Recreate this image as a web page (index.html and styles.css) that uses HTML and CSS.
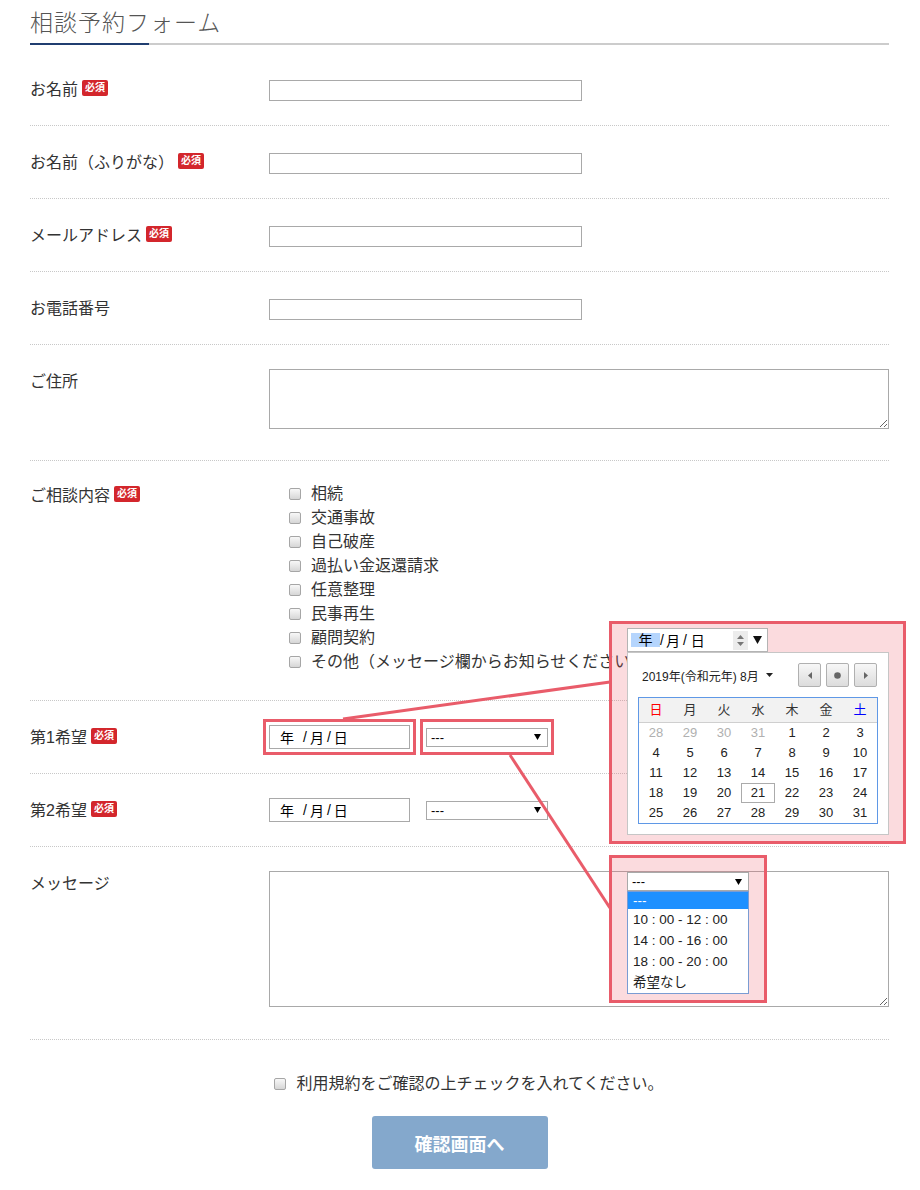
FILE: index.html
```html
<!DOCTYPE html>
<html lang="ja">
<head>
    <meta charset="UTF-8">
    <meta name="viewport" content="width=device-width, initial-scale=1.0">
    <title>相談予約フォーム</title>
    <link rel="stylesheet" href="styles.css">
</head>
<body>
<div class="page">
    <h2 class="form-title">相談予約フォーム</h2>

    <!-- 基本情報 -->
    <div class="form-row">
        <div class="label">お名前<span class="req">必須</span></div>
        <div class="field"><input type="text" class="text"></div>
    </div>
    <div class="form-row">
        <div class="label">お名前（ふりがな）<span class="req">必須</span></div>
        <div class="field"><input type="text" class="text"></div>
    </div>
    <div class="form-row">
        <div class="label">メールアドレス<span class="req">必須</span></div>
        <div class="field"><input type="text" class="text"></div>
    </div>
    <div class="form-row">
        <div class="label">お電話番号</div>
        <div class="field"><input type="text" class="text"></div>
    </div>
    <div class="form-row">
        <div class="label">ご住所</div>
        <div class="field"><textarea class="area area-address"></textarea></div>
    </div>

    <!-- 相談内容 -->
    <div class="form-row row-check">
        <div class="label">ご相談内容<span class="req">必須</span></div>
        <div class="field">
            <ul class="check-list">
                <li><label><input type="checkbox">相続</label></li>
                <li><label><input type="checkbox">交通事故</label></li>
                <li><label><input type="checkbox">自己破産</label></li>
                <li><label><input type="checkbox">過払い金返還請求</label></li>
                <li><label><input type="checkbox">任意整理</label></li>
                <li><label><input type="checkbox">民事再生</label></li>
                <li><label><input type="checkbox">顧問契約</label></li>
                <li><label><input type="checkbox">その他（メッセージ欄からお知らせください）</label></li>
            </ul>
        </div>
    </div>

    <!-- 希望日時 -->
    <div class="form-row">
        <div class="label">第1希望<span class="req">必須</span></div>
        <div class="field date-line">
            <span class="date-box mark"><span class="yy">年</span><span class="sep">/</span>月<span class="sep">/</span>日</span>
            <span class="select-wrap mark">
                <span class="select">---<svg width="7" height="6" viewBox="0 0 7 6"><polygon points="0,0 7,0 3.5,6" fill="#000"/></svg></span>
            </span>
        </div>
    </div>
    <div class="form-row">
        <div class="label">第2希望<span class="req">必須</span></div>
        <div class="field date-line">
            <span class="date-box"><span class="yy">年</span><span class="sep">/</span>月<span class="sep">/</span>日</span>
            <span class="select-wrap">
                <span class="select">---<svg width="7" height="6" viewBox="0 0 7 6"><polygon points="0,0 7,0 3.5,6" fill="#000"/></svg></span>
            </span>
        </div>
    </div>
    <div class="form-row">
        <div class="label">メッセージ</div>
        <div class="field"><textarea class="area area-message"></textarea></div>
    </div>

    <div class="agree">
        <label><input type="checkbox">利用規約をご確認の上チェックを入れてください。</label>
    </div>
    <button type="button" class="submit">確認画面へ</button>

    <!-- 説明用の吹き出し -->
    <svg class="leaders" width="920" height="1190">
        <line x1="343" y1="719" x2="610" y2="682"/>
        <line x1="510" y1="755" x2="610" y2="908"/>
    </svg>

    <div class="callout callout-cal">
        <div class="cal-input">
            <span class="cal-yy">年</span><span class="sep">/</span>月<span class="sep sep-2">/</span>日
            <svg class="spin" width="15" height="19" viewBox="0 0 15 19">
                <rect width="15" height="19" fill="#ececec"/>
                <polygon points="4,8 7.5,4 11,8" fill="#777"/>
                <polygon points="4,11 11,11 7.5,15" fill="#777"/>
            </svg>
            <svg class="drop" width="9" height="8" viewBox="0 0 9 8"><polygon points="0,0 9,0 4.5,8" fill="#111"/></svg>
        </div>
        <div class="cal-popup">
            <div class="cal-head">
                <span class="cal-month">2019年(令和元年) 8月<svg width="7" height="4" viewBox="0 0 7 4"><polygon points="0,0 7,0 3.5,4" fill="#222"/></svg></span>
                <span class="cal-nav">
                    <button type="button"><svg width="4" height="7" viewBox="0 0 4 7"><polygon points="4,0 4,7 0,3.5" fill="#666"/></svg></button>
                    <button type="button"><svg width="7" height="7" viewBox="0 0 7 7"><circle cx="3.5" cy="3.5" r="3.3" fill="#666"/></svg></button>
                    <button type="button"><svg width="4" height="7" viewBox="0 0 4 7"><polygon points="0,0 4,3.5 0,7" fill="#666"/></svg></button>
                </span>
            </div>
            <div class="cal-grid">
                <span class="wd sun">日</span><span class="wd">月</span><span class="wd">火</span><span class="wd">水</span><span class="wd">木</span><span class="wd">金</span><span class="wd sat">土</span>
                <span class="day off">28</span><span class="day off">29</span><span class="day off">30</span><span class="day off">31</span><span class="day">1</span><span class="day">2</span><span class="day">3</span>
                <span class="day">4</span><span class="day">5</span><span class="day">6</span><span class="day">7</span><span class="day">8</span><span class="day">9</span><span class="day">10</span>
                <span class="day">11</span><span class="day">12</span><span class="day">13</span><span class="day">14</span><span class="day">15</span><span class="day">16</span><span class="day">17</span>
                <span class="day">18</span><span class="day">19</span><span class="day">20</span><span class="day today">21</span><span class="day">22</span><span class="day">23</span><span class="day">24</span>
                <span class="day">25</span><span class="day">26</span><span class="day">27</span><span class="day">28</span><span class="day">29</span><span class="day">30</span><span class="day">31</span>
            </div>
        </div>
    </div>

    <div class="callout callout-time">
        <span class="select">---<svg width="7" height="6" viewBox="0 0 7 6"><polygon points="0,0 7,0 3.5,6" fill="#000"/></svg></span>
        <ul class="opt-list">
            <li class="on">---</li>
            <li>10 : 00 - 12 : 00</li>
            <li>14 : 00 - 16 : 00</li>
            <li>18 : 00 - 20 : 00</li>
            <li>希望なし</li>
        </ul>
    </div>
</div>
</body>
</html>
```

FILE: styles.css
```css
body {
    margin: 0;
    font-family: "Liberation Sans", "Noto Sans CJK JP", sans-serif;
    color: #333;
    background: #fff;
}
.page {
    position: relative;
    padding: 6px 31px 21px 30px;
}
.form-title {
    margin: 0 0 8px;
    padding-bottom: 5px;
    font-size: 23px;
    line-height: 34px;
    font-weight: 300;
    letter-spacing: 1px;
    color: #555;
    background: linear-gradient(to right, #203e70 119px, #cccccc 119px) left bottom / 100% 2px no-repeat;
}

/* rows */
.form-row {
    display: grid;
    grid-template-columns: 239px 1fr;
    padding: 25px 0 24px;
    border-bottom: 1px dotted #c8c8c8;
}
.label {
    display: flex;
    align-items: center;
    height: 20px;
    font-size: 16px;
}
.row-check .label {
    margin-top: -2px;
}
.req {
    margin-left: 4px;
    padding: 0 3px;
    height: 16px;
    line-height: 16px;
    font-size: 10px;
    font-weight: bold;
    color: #fff;
    background: #d3262c;
    border-radius: 2px;
}
.text {
    display: block;
    margin-top: 2px;
    width: 313px;
    height: 21px;
    padding: 0 4px;
    border: 1px solid #a9a9a9;
    box-sizing: border-box;
}
.area {
    display: block;
    width: 100%;
    margin-top: -1px;
    border: 1px solid #a9a9a9;
    box-sizing: border-box;
}
.area-address {
    height: 60px;
    margin-bottom: 7px;
}
.area-message {
    height: 136px;
    margin-bottom: 8px;
}

/* checkboxes */
.check-list {
    list-style: none;
    margin: -4px 0 2px;
    padding: 0 0 0 20px;
}
.check-list li {
    height: 24px;
    line-height: 24px;
    font-size: 16px;
}
.check-list label,
.agree label {
    display: inline-flex;
    align-items: center;
    white-space: nowrap;
}
input[type="checkbox"] {
    appearance: none;
    -webkit-appearance: none;
    width: 12px;
    height: 12px;
    margin: 0 10px 0 0;
    border: 1px solid #a6a6a6;
    border-radius: 2px;
    background: linear-gradient(#f8f8f8, #d6d6d6);
    box-sizing: border-box;
}

/* date + time */
.date-line {
    display: flex;
    gap: 16px;
}
.date-box {
    display: flex;
    align-items: center;
    width: 141px;
    height: 24px;
    margin-top: -1px;
    padding-left: 10px;
    border: 1px solid #a9a9a9;
    box-sizing: border-box;
    font-size: 14px;
    color: #000;
}
.date-box .yy {
    padding-right: 6px;
}
.sep {
    padding: 0 3px;
}
.select-wrap {
    display: flex;
    align-items: center;
    width: 122px;
    height: 24px;
    margin-top: -1px;
}
.select {
    display: flex;
    align-items: center;
    justify-content: space-between;
    width: 122px;
    height: 19px;
    padding: 0 6px 0 4px;
    border: 1px solid #a9a9a9;
    box-sizing: border-box;
    background: #fff;
    font-size: 13px;
    color: #000;
}
.mark {
    outline: 3px solid #e95c6a;
    outline-offset: 3px;
}

/* submit */
.agree {
    display: flex;
    justify-content: center;
    padding: 34px 0 0 19px;
    line-height: 20px;
    font-size: 16px;
}
.submit {
    display: block;
    margin: 22px auto 0;
    width: 176px;
    height: 53px;
    border: 0;
    border-radius: 3px;
    background: #84a8cc;
    color: #fff;
    font-family: inherit;
    font-size: 18px;
    font-weight: bold;
}

/* callouts */
.leaders {
    position: absolute;
    left: 0;
    top: 0;
    pointer-events: none;
}
.leaders line {
    stroke: #e95c6a;
    stroke-width: 3;
}
.callout {
    position: absolute;
    border: 3px solid #e95c6a;
    background: rgba(235, 90, 105, 0.22);
}
.callout-cal {
    left: 609px;
    top: 621px;
    width: 262px;
    padding: 4px 14px 6px 15px;
}
.cal-input {
    display: flex;
    align-items: center;
    width: 141px;
    height: 24px;
    padding: 0 5px 0 3px;
    border: 1px solid #b4b4b4;
    box-sizing: border-box;
    background: #fff;
    font-size: 14px;
    color: #000;
}
.cal-yy {
    display: inline-block;
    width: 29px;
    line-height: 14px;
    text-align: center;
    background: #b5d5fd;
}
.cal-input .sep {
    padding: 0 2px 0 0;
}
.cal-input .sep-2 {
    padding: 0 4px 0 3px;
}
.spin {
    margin-left: auto;
    margin-right: 5px;
}
.cal-popup {
    padding: 10px;
    border: 1px solid #c6c6c6;
    background: #fff;
}
.cal-head {
    display: flex;
    align-items: center;
    justify-content: space-between;
    height: 24px;
    margin-bottom: 10px;
    padding: 0 1px 0 4px;
}
.cal-month {
    display: flex;
    align-items: center;
    font-size: 12px;
    color: #222;
}
.cal-month svg {
    margin-left: 7px;
}
.cal-nav {
    display: flex;
    gap: 5px;
}
.cal-nav button {
    display: flex;
    align-items: center;
    justify-content: center;
    width: 23px;
    height: 24px;
    padding: 0;
    border: 1px solid #b0b0b0;
    border-radius: 2px;
    background: linear-gradient(#f7f7f7, #dcdcdc);
}
.cal-grid {
    display: grid;
    grid-template-columns: repeat(7, 34px);
    border: 1px solid #5f98e6;
    font-size: 13px;
    color: #222;
    text-align: center;
}
.wd {
    height: 24px;
    line-height: 24px;
    background: #f2f2f2;
    border-bottom: 1px solid #cfcfcf;
    color: #333;
}
.wd.sun {
    color: #f00;
}
.wd.sat {
    color: #00f;
}
.day {
    height: 20px;
    line-height: 20px;
}
.day.off {
    color: #b0b0b0;
}
.day.today {
    box-shadow: inset 0 0 0 1px #ababab;
}
.callout-time {
    left: 609px;
    top: 855px;
    width: 122px;
    padding: 14px 15px 6px;
}
.opt-list {
    list-style: none;
    margin: 0;
    padding: 0;
    border: 1px solid #7a9cd3;
    background: #fff;
    font-size: 13.5px;
    color: #222;
}
.opt-list li {
    height: 21px;
    line-height: 21px;
    padding-left: 5px;
}
.opt-list li.on {
    height: 17px;
    line-height: 17px;
    background: #1e90ff;
    color: #fff;
}
```
